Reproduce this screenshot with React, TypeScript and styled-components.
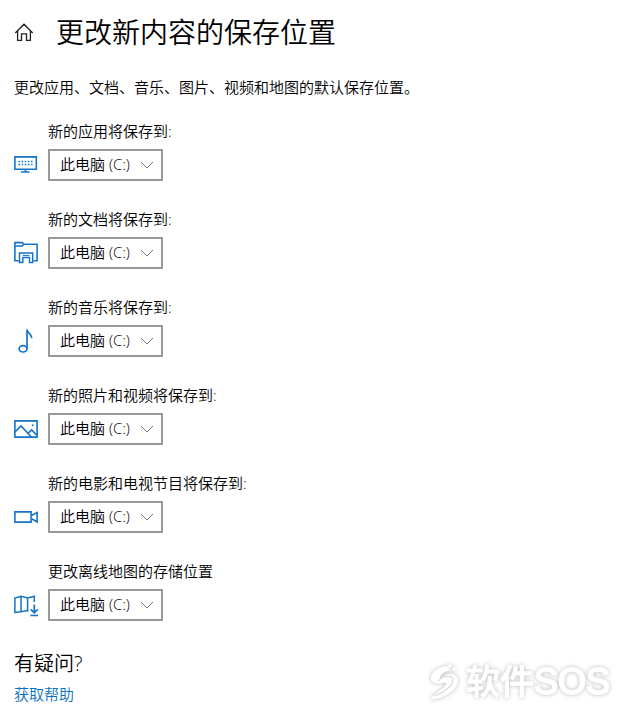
import React, { useId } from "react";
import styled, { createGlobalStyle } from "styled-components";

const GlobalStyle = createGlobalStyle`
  * { box-sizing: border-box; }
  body {
    margin: 0;
    background: #fff;
    color: #000;
    font: 350 15px/20px "Open Sans", "Noto Sans CJK SC", sans-serif;
  }
`;

const Page = styled.main`
  display: flex;
  flex-direction: column;
  align-items: flex-start;
  position: relative;
  min-height: 100vh;
  padding: 12px 14px 4px;
`;

const Header = styled.header`
  display: flex;
  align-items: center;
  gap: 22px;
`;

const HomeButton = styled.button`
  display: flex;
  padding: 0;
  border: 0;
  background: none;
  color: #222;
`;

const Title = styled.h1`
  margin: 0;
  font-size: 28px;
  line-height: 40px;
  font-weight: 350;
`;

const Intro = styled.p`
  margin: 25px 0 24px;
`;

const Settings = styled.div`
  display: flex;
  flex-direction: column;
  gap: 28px;
`;

const Setting = styled.div`
  display: grid;
  grid-template-columns: 24px auto;
  column-gap: 10px;
  row-gap: 8px;
  align-items: center;
  justify-items: start;
`;

const Label = styled.label`
  grid-column: 2;
`;

const Icon = styled.svg`
  display: block;
  fill: none;
  stroke: currentColor;
`;

const SettingIcon = styled(Icon)`
  color: #1474c8;
`;

const SelectBox = styled.div`
  display: grid;
  align-items: center;

  > * { grid-area: 1 / 1; }
`;

const Select = styled.select`
  appearance: none;
  width: 115px;
  height: 32px;
  padding: 0 30px 2px 10px;
  border: 2px solid #999;
  border-radius: 0;
  background: #fff;
  color: #000;
  font: inherit;
`;

const Chevron = styled(Icon)`
  justify-self: end;
  margin-right: 9px;
  color: #777;
  pointer-events: none;
`;

const HelpTitle = styled.h2`
  margin: 29px 0 6px;
  font-size: 20px;
  line-height: 28px;
  font-weight: 350;
`;

const HelpLink = styled.a`
  color: #0a70c4;
  text-decoration: none;
`;

const Watermark = styled.div`
  position: absolute;
  right: 12px;
  bottom: 7px;
  display: flex;
  align-items: center;
  gap: 5px;
  color: #fff;
  font: 500 34px/44px "Liberation Sans", "Noto Sans CJK SC", sans-serif;
  filter: drop-shadow(0 0 2px #bbb);
  pointer-events: none;
`;

const WatermarkText = styled.span`
  display: flex;
  align-items: center;
  -webkit-text-stroke: 1px #fff;
`;

const WatermarkLatin = styled.span`
  font-size: 36px;
  -webkit-text-stroke: 2px #fff;
`;

type Kind = "apps" | "documents" | "music" | "photos" | "movies" | "maps";

const drawings: Record<Kind, React.ReactNode> = {
  apps: (
    <>
      <path d="M.9 3.9h21.4v12.4H.9z" strokeWidth="1.6" />
      <path d="M4.5 8.5h14M4.5 11.5h14" strokeWidth="1.6" strokeDasharray="1.6 1.5" />
      <path d="M11.5 17v2M7 19h8.5" strokeWidth="1.6" />
    </>
  ),
  documents: (
    <>
      <path d="M4.8 19.7H.9V1.6h7.4l1.5 1.6h13.3v16.5h-3.6M.9 5h7.4l1.5-1.8" strokeWidth="1.6" />
      <path d="M5.5 21.5v-9.6h13.2v9.6h-3.2v-4.9H8.8v4.9z" strokeWidth="1.5" />
      <path d="M8.8 14.4h6.7" strokeWidth="1" />
    </>
  ),
  music: (
    <>
      <ellipse cx="9" cy="19.8" rx="3.9" ry="3.2" strokeWidth="1.7" />
      <path d="M13 20V.5c0 4 4.8 4 4.8 8.7" strokeWidth="1.7" />
    </>
  ),
  photos: (
    <>
      <path d="M.9 3.9h22.2v16.2H.9z" strokeWidth="1.6" />
      <path d="M1 15l6-6 10.5 11M14 16.3l3.6-3.4 5.5 5.6" strokeWidth="1.6" />
      <path d="M17.8 8.3h1.7" strokeWidth="1.7" />
    </>
  ),
  movies: (
    <>
      <path d="M.9 6.9h16.2v10.2H.9z" strokeWidth="1.6" />
      <path d="M17.5 10.5l5.6-3v9.3l-5.6-3" strokeWidth="1.6" />
    </>
  ),
  maps: (
    <>
      <path d="M14.5 18l-1.5-.5-5.9 1.2-6.2.8V5l6.2-1.8 6.5 1.8 6.7-1.8V9M7 3.5v15M13.6 5v13" strokeWidth="1.5" />
      <path d="M20.3 11.5v8.3M16.8 16.3l3.5 3.5 3.5-3.5M16.4 22.5h7.6" strokeWidth="1.7" />
    </>
  ),
};

const settings: { kind: Kind; label: string }[] = [
  { kind: "apps", label: "新的应用将保存到:" },
  { kind: "documents", label: "新的文档将保存到:" },
  { kind: "music", label: "新的音乐将保存到:" },
  { kind: "photos", label: "新的照片和视频将保存到:" },
  { kind: "movies", label: "新的电影和电视节目将保存到:" },
  { kind: "maps", label: "更改离线地图的存储位置" },
];

function LocationSetting({ kind, label }: { kind: Kind; label: string }) {
  const id = useId();
  return (
    <Setting>
      <Label htmlFor={id}>{label}</Label>
      <SettingIcon width="24" height="24" viewBox="0 0 24 24" overflow="visible" aria-hidden="true">
        {drawings[kind]}
      </SettingIcon>
      <SelectBox>
        <Select id={id} defaultValue="c">
          <option value="c">此电脑 (C:)</option>
        </Select>
        <Chevron width="14" height="8" viewBox="0 0 14 8" aria-hidden="true">
          <path d="M1 1l6 6 6-6" />
        </Chevron>
      </SelectBox>
    </Setting>
  );
}

export default function App() {
  return (
    <>
      <GlobalStyle />
      <Page>
        <Header>
          <HomeButton type="button" aria-label="主页">
            <Icon width="20" height="20" viewBox="0 0 20 20" aria-hidden="true">
              <path d="M1.3 11L10 2.2l8.7 8.8M3.6 9v9.3h3.9v-6.5h5v6.5h3.9V9" strokeWidth="1.3" />
            </Icon>
          </HomeButton>
          <Title>更改新内容的保存位置</Title>
        </Header>
        <Intro>更改应用、文档、音乐、图片、视频和地图的默认保存位置。</Intro>
        <Settings>
          {settings.map((s) => (
            <LocationSetting key={s.kind} {...s} />
          ))}
        </Settings>
        <HelpTitle>有疑问?</HelpTitle>
        <HelpLink href="#help">获取帮助</HelpLink>
        <Watermark>
          <svg width="32" height="38" viewBox="0 0 32 38" aria-hidden="true">
            <path
              fill="#fff"
              d="M18 3C8 4 1 10 2 16c1 5 7 5 11 4 4-1 6 0 2 4-4 4-10 6-14 13 12-1 26-8 28-18 1-6-4-9-10-8-4 1-7 3-8 5 0-5 5-8 11-9zM20 1l3 1-1 3-3-1zM24 4l3 1-1 3-3-1z"
            />
            <path fill="none" stroke="#ddd" strokeWidth="1.3" d="M9 18c4-5 13-7 15-2 1 6-8 13-19 17" />
          </svg>
          <WatermarkText>
            软件<WatermarkLatin>SOS</WatermarkLatin>
          </WatermarkText>
        </Watermark>
      </Page>
    </>
  );
}
